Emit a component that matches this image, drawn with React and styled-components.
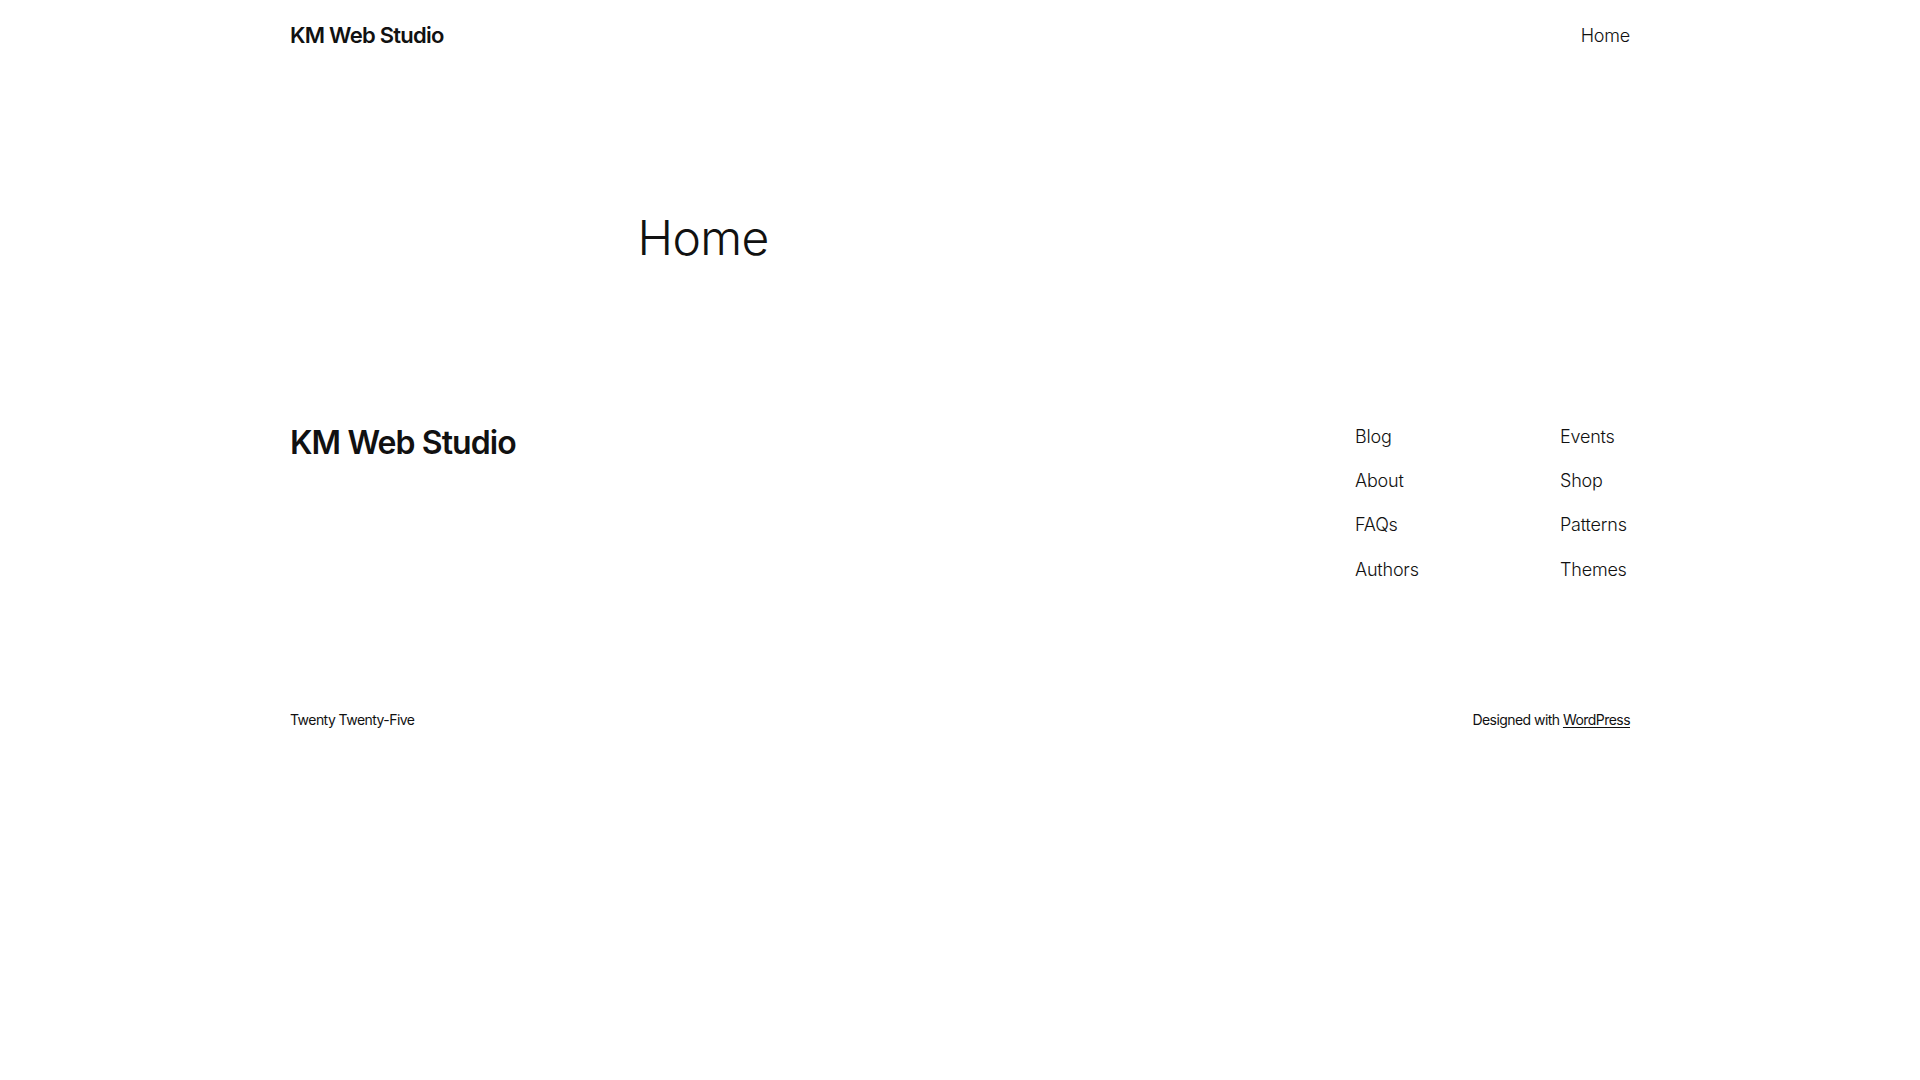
import React from 'react'
import styled, { createGlobalStyle } from 'styled-components'

const GlobalStyle = createGlobalStyle`
  html, body {
    margin: 0;
    padding: 0;
    background: #ffffff;
  }
  body {
    font-family: Inter, "Open Sans", "Liberation Sans", sans-serif;
    color: #111111;
    -webkit-font-smoothing: antialiased;
  }
`

const Wide = styled.div`
  max-width: 1340px;
  margin: 0 auto;
`

const Header = styled(Wide)`
  display: flex;
  align-items: center;
  justify-content: space-between;
  padding: 20px 0;
`

const SiteTitle = styled.a`
  font-size: ${p => p.$size}px;
  line-height: ${p => p.$lh};
  font-weight: 600;
  letter-spacing: ${p => p.$spacing}px;
  color: #111111;
  text-decoration: none;
`

const NavLink = styled.a`
  display: block;
  font-size: 18px;
  line-height: 1.4;
  font-weight: 300;
  letter-spacing: -0.2px;
  color: #111111;
  text-decoration: none;
`

const Main = styled.main`
  padding-top: 140px;
`

const Content = styled.div`
  max-width: 645px;
  margin: 0 auto;
`

const PageTitle = styled.h1`
  margin: 0;
  font-size: 48px;
  line-height: 1.125;
  font-weight: 300;
  letter-spacing: -0.6px;
`

const Footer = styled(Wide)`
  padding-top: 158px;
`

const FooterTop = styled.div`
  display: flex;
  justify-content: space-between;
  align-items: flex-start;
  padding-top: 1px;
`

const FooterNav = styled.div`
  display: grid;
  grid-template-columns: 205px 70px;
`

const NavColumn = styled.nav`
  display: flex;
  flex-direction: column;
  gap: 19.1px;
`

const FooterBottom = styled.div`
  display: flex;
  justify-content: space-between;
  padding-top: 128px;
  font-size: 14px;
  line-height: 1.4;
  font-weight: 400;
  letter-spacing: -0.55px;
`

const Credit = styled.p`
  margin: 0;
`

const Underlined = styled.a`
  color: #111111;
  text-decoration: underline;
  text-underline-offset: 2px;
`

const leftLinks = ['Blog', 'About', 'FAQs', 'Authors']
const rightLinks = ['Events', 'Shop', 'Patterns', 'Themes']

export default function App() {
  return (
    <>
      <GlobalStyle />
      <Header as="header">
        <SiteTitle href="#" $size={22} $lh={1.4} $spacing={-0.75}>KM Web Studio</SiteTitle>
        <NavLink href="#">Home</NavLink>
      </Header>
      <Main>
        <Content>
          <PageTitle>Home</PageTitle>
        </Content>
      </Main>
      <Footer as="footer">
        <FooterTop>
          <SiteTitle href="#" $size={32} $lh={1.2} $spacing={-0.9}>KM Web Studio</SiteTitle>
          <FooterNav>
            <NavColumn>
              {leftLinks.map(l => <NavLink key={l} href="#">{l}</NavLink>)}
            </NavColumn>
            <NavColumn>
              {rightLinks.map(l => <NavLink key={l} href="#">{l}</NavLink>)}
            </NavColumn>
          </FooterNav>
        </FooterTop>
        <FooterBottom>
          <Credit>Twenty Twenty-Five</Credit>
          <Credit>Designed with <Underlined href="#">WordPress</Underlined></Credit>
        </FooterBottom>
      </Footer>
    </>
  )
}
